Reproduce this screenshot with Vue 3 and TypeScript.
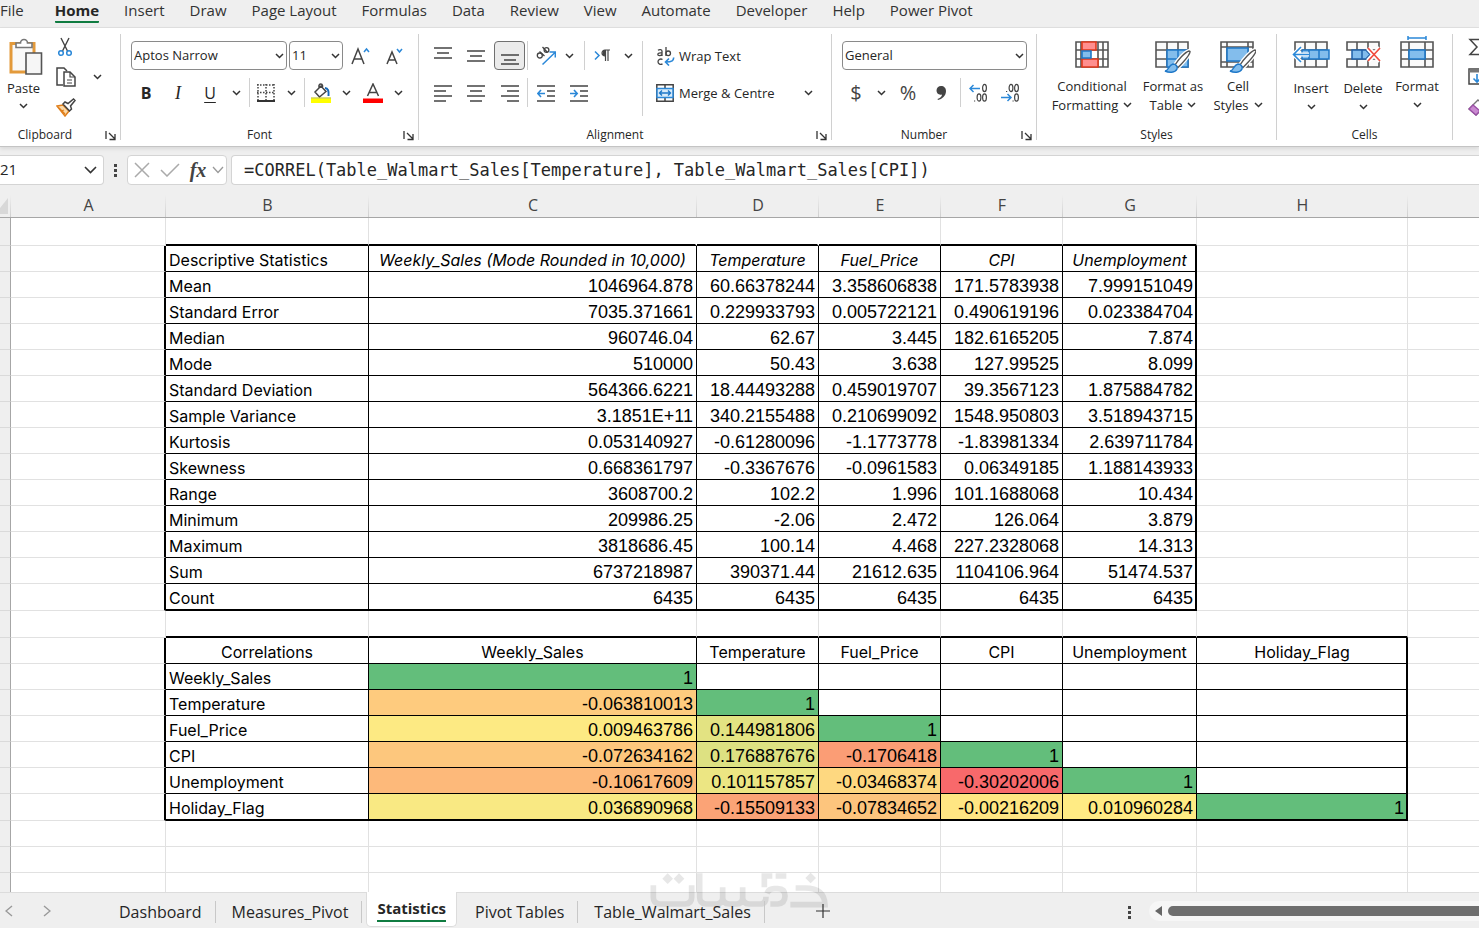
<script setup lang="ts">
import { h, ref } from 'vue'
import type { FunctionalComponent } from 'vue'

const Chev: FunctionalComponent = () =>
  h('svg', { width: 9, height: 6, viewBox: '0 0 9 6', 'aria-hidden': 'true' }, [
    h('path', { d: 'M1 1l3.5 3.5L8 1', fill: 'none', stroke: '#333', 'stroke-width': 1.5 }),
  ])

const Launcher: FunctionalComponent = () =>
  h('svg', { width: 11, height: 11, viewBox: '0 0 11 11', 'aria-hidden': 'true' }, [
    h('path', { d: 'M1 1v8M4 3l5.5 5.5M10 4v5.5H4.5', fill: 'none', stroke: '#333', 'stroke-width': 1.3 }),
  ])

const menu = ['File', 'Home', 'Insert', 'Draw', 'Page Layout', 'Formulas', 'Data', 'Review', 'View', 'Automate', 'Developer', 'Help', 'Power Pivot']
const sheets = ['Dashboard', 'Measures_Pivot', 'Statistics', 'Pivot Tables', 'Table_Walmart_Sales']
const columns = ['A', 'B', 'C', 'D', 'E', 'F', 'G', 'H', '']

const nameBox = ref('21')
const formula = ref('=CORREL(Table_Walmart_Sales[Temperature], Table_Walmart_Sales[CPI])')

interface Box { top: number; bottom: number; last: number }
const boxes: Box[] = [
  { top: 2, bottom: 15, last: 6 },
  { top: 17, bottom: 23, last: 7 },
]

const data: Record<number, string[]> = {
  2: ['Descriptive Statistics', 'Weekly_Sales (Mode Rounded in 10,000)', 'Temperature', 'Fuel_Price', 'CPI', 'Unemployment'],
  3: ['Mean', '1046964.878', '60.66378244', '3.358606838', '171.5783938', '7.999151049'],
  4: ['Standard Error', '7035.371661', '0.229933793', '0.005722121', '0.490619196', '0.023384704'],
  5: ['Median', '960746.04', '62.67', '3.445', '182.6165205', '7.874'],
  6: ['Mode', '510000', '50.43', '3.638', '127.99525', '8.099'],
  7: ['Standard Deviation', '564366.6221', '18.44493288', '0.459019707', '39.3567123', '1.875884782'],
  8: ['Sample Variance', '3.1851E+11', '340.2155488', '0.210699092', '1548.950803', '3.518943715'],
  9: ['Kurtosis', '0.053140927', '-0.61280096', '-1.1773778', '-1.83981334', '2.639711784'],
  10: ['Skewness', '0.668361797', '-0.3367676', '-0.0961583', '0.06349185', '1.188143933'],
  11: ['Range', '3608700.2', '102.2', '1.996', '101.1688068', '10.434'],
  12: ['Minimum', '209986.25', '-2.06', '2.472', '126.064', '3.879'],
  13: ['Maximum', '3818686.45', '100.14', '4.468', '227.2328068', '14.313'],
  14: ['Sum', '6737218987', '390371.44', '21612.635', '1104106.964', '51474.537'],
  15: ['Count', '6435', '6435', '6435', '6435', '6435'],
  17: ['Correlations', 'Weekly_Sales', 'Temperature', 'Fuel_Price', 'CPI', 'Unemployment', 'Holiday_Flag'],
  18: ['Weekly_Sales', '1'],
  19: ['Temperature', '-0.063810013', '1'],
  20: ['Fuel_Price', '0.009463786', '0.144981806', '1'],
  21: ['CPI', '-0.072634162', '0.176887676', '-0.1706418', '1'],
  22: ['Unemployment', '-0.10617609', '0.101157857', '-0.03468374', '-0.30202006', '1'],
  23: ['Holiday_Flag', '0.036890968', '-0.15509133', '-0.07834652', '-0.00216209', '0.010960284', '1'],
}

const scale: Record<string, string> = {
  '1': '#63be7b',
  '-0.063810013': '#fecb7e',
  '0.009463786': '#fdea83',
  '0.144981806': '#e3e382',
  '-0.072634162': '#fdc77d',
  '0.176887676': '#dde182',
  '-0.1706418': '#fb9d75',
  '-0.10617609': '#fdb97a',
  '0.101157857': '#ece683',
  '-0.03468374': '#fed880',
  '-0.30202006': '#f8696b',
  '0.036890968': '#f9e983',
  '-0.15509133': '#fba376',
  '-0.07834652': '#fdc57d',
  '-0.00216209': '#ffe683',
  '0.010960284': '#ffeb84',
}

const rowCount = 26

function text(r: number, c: number): string {
  return c > 0 ? data[r]?.[c - 1] ?? '' : ''
}

function cellClass(r: number, c: number): string[] {
  const out: string[] = []
  for (const b of boxes) {
    if (r === b.top - 1 && c >= 1 && c <= b.last) out.push('edge-bottom')
    if (r < b.top || r > b.bottom || c > b.last) continue
    if (c === 0) {
      out.push('edge-right')
      continue
    }
    out.push('ruled')
    if (c === b.last) out.push('edge-right')
    if (r === b.bottom) out.push('edge-bottom')
    if (r === b.top && (c > 1 || r === 17)) out.push('center')
    else if (c > 1) out.push('number')
    if (r === 2 && c > 1) out.push('italic')
  }
  if (r === 1 && (c === 2 || c === 3)) out.push('gap-right')
  return out
}

function fill(r: number, c: number): Record<string, string> | undefined {
  const color = r >= 18 && c > 1 ? scale[text(r, c)] : undefined
  return color ? { backgroundColor: color } : undefined
}
</script>

<template>
  <div class="app">
    <nav class="menu" aria-label="Ribbon tabs">
      <button v-for="m in menu" :key="m" class="menu-item" :class="{ active: m === 'Home' }"><span>{{ m }}</span></button>
    </nav>

    <div class="ribbon">
      <section class="group clipboard">
        <div class="cols">
          <button class="big paste">
            <svg width="34" height="38" viewBox="0 0 34 38">
              <path d="M2 5.500H25V34H2z" fill="#f9f9f9" stroke="#e39a3b" stroke-width="3" />
              <path d="M7 9.500V5h4.500a3.500 3.500 0 0 1 7 0H23v4.500z" fill="#fff" stroke="#777" stroke-width="1.600" />
              <path d="M17 15h15.500v21H17z" fill="#f6f6f6" stroke="#555" stroke-width="1.600" />
            </svg>
            <span>Paste</span>
            <Chev />
          </button>
          <div class="stack">
            <button class="ib" aria-label="Cut">
              <svg width="18" height="20" viewBox="-1 0 18 20">
                <path d="M4 1l6.500 13M12 1L5.500 14" fill="none" stroke="#444" stroke-width="1.400" />
                <circle cx="4" cy="16" r="2.300" fill="none" stroke="#2b88d8" stroke-width="1.500" />
                <circle cx="12" cy="16" r="2.300" fill="none" stroke="#2b88d8" stroke-width="1.500" />
              </svg>
            </button>
            <button class="ib copy" aria-label="Copy">
              <svg width="20" height="20" viewBox="0 0 20 20">
                <path d="M7 18H1V1h7l3 3" fill="none" stroke="#444" stroke-width="1.500" />
                <path d="M8 5h6l5 5v9H8z" fill="#fff" stroke="#444" stroke-width="1.500" />
                <path d="M14 5v5h5M11 13h5M11 16h5" fill="none" stroke="#444" stroke-width="1.200" />
              </svg>
              <Chev />
            </button>
            <button class="ib" aria-label="Format Painter">
              <svg width="20" height="19" viewBox="0 0 20 19">
                <path d="M1 8l6-1 6 6-4 5z" fill="#fbd9a8" stroke="#e07f1c" stroke-width="1.500" />
                <path d="M3 10l6 6M5 13l3-1" stroke="#e07f1c" stroke-width="1.300" />
                <path d="M7 6l2-2 3 1.500L17.500 1 19 2.500 14.500 8l1 3-2 2z" fill="#fff" stroke="#444" stroke-width="1.500" />
              </svg>
            </button>
          </div>
        </div>
        <footer><span>Clipboard</span><button class="launch" aria-label="Clipboard settings"><Launcher /></button></footer>
      </section>

      <section class="group font">
        <div class="row">
          <div class="pick family">
            <select aria-label="Font"><option>Aptos Narrow</option></select><Chev />
          </div>
          <div class="pick size">
            <select aria-label="Font size"><option>11</option></select><Chev />
          </div>
          <button class="ib w34" aria-label="Increase font size">
            <svg width="20" height="20" viewBox="0 0 20 20">
              <path d="M2 18L8 3l6 15M4.200 13h7.600" fill="none" stroke="#444" stroke-width="1.500" />
              <path d="M14 6l2.500-3L19 6" fill="none" stroke="#2b88d8" stroke-width="1.500" />
            </svg>
          </button>
          <button class="ib w34" aria-label="Decrease font size">
            <svg width="18" height="20" viewBox="0 0 18 20">
              <path d="M2 18L7 6l5 12M4 14h6" fill="none" stroke="#444" stroke-width="1.500" />
              <path d="M12 3l2.500 3L17 3" fill="none" stroke="#2b88d8" stroke-width="1.500" />
            </svg>
          </button>
        </div>
        <div class="row">
          <button class="ib w30 glyph bold">B</button>
          <button class="ib w34 glyph slant">I</button>
          <button class="ib w30 glyph under">U</button>
          <button class="ib w22" aria-label="Underline options"><Chev /></button>
          <i class="sep"></i>
          <button class="ib w28" aria-label="Borders">
            <svg width="18" height="18" viewBox="0 0 18 18">
              <path d="M0 1h18M1 0v16M17 0v16M9 0v16M0 8.500h18" fill="none" stroke="#444" stroke-width="1.500" stroke-dasharray="1.500 1.500" />
              <path d="M0 17h18" stroke="#333" stroke-width="2" />
            </svg>
          </button>
          <button class="ib w22" aria-label="Border options"><Chev /></button>
          <i class="sep"></i>
          <button class="ib w28" aria-label="Fill colour">
            <svg width="20" height="20" viewBox="0 0 20 20">
              <path d="M4 9l6-6 5 5.500-6.500 5.500zM8 6V2.500a1.800 1.800 0 0 1 3.500 0V5" fill="none" stroke="#444" stroke-width="1.500" />
              <path d="M14 5c3 0 4 3 3.500 8" fill="none" stroke="#1668b8" stroke-width="2" />
              <path d="M0 15.500h20V20H0z" fill="#ff0" /><path d="M0 15h20" stroke="#bb0" stroke-width="1" />
            </svg>
          </button>
          <button class="ib w22" aria-label="Fill options"><Chev /></button>
          <button class="ib w32" aria-label="Font colour">
            <svg width="20" height="20" viewBox="0 0 20 20">
              <path d="M4.500 13L10 1l5.500 12M6.500 9.500h7" fill="none" stroke="#444" stroke-width="1.500" />
              <path d="M0 15.500h20V20H0z" fill="#f00" />
            </svg>
          </button>
          <button class="ib w18" aria-label="Font colour options"><Chev /></button>
        </div>
        <footer><span>Font</span><button class="launch" aria-label="Font settings"><Launcher /></button></footer>
      </section>

      <section class="group align">
        <div class="cols">
          <div class="left">
            <div class="row">
              <button class="ib w30" aria-label="Top align"><svg width="18" height="18" viewBox="0 0 18 18"><path d="M0 1h18M3 6h12M0 11h18" stroke="#444" stroke-width="1.500" /></svg></button>
              <button class="ib w36" aria-label="Middle align"><svg width="18" height="18" viewBox="0 0 18 18"><path d="M0 4h18M3 9h12M0 14h18" stroke="#444" stroke-width="1.500" /></svg></button>
              <button class="ib w31 pressed" aria-label="Bottom align"><svg width="18" height="18" viewBox="0 0 18 18"><path d="M0 8h18M3 13h12M0 17h18" stroke="#444" stroke-width="1.500" /></svg></button>
              <i class="sep"></i>
              <button class="ib w32" aria-label="Orientation">
                <svg width="20" height="20" viewBox="0 0 20 20">
                  <g fill="none" stroke="#444" stroke-width="1.300"><circle cx="3.800" cy="9.500" r="2.500" /><path d="M3.500 5.500l5 4.500M6.500 1l5 5.500" /><circle cx="10.500" cy="4" r="2.400" /></g>
                  <path d="M6.500 18.500L19 6.500M13.500 6H19.300v5.500" fill="none" stroke="#2b88d8" stroke-width="1.500" />
                </svg>
              </button>
              <button class="ib w18 tight" aria-label="Orientation options"><Chev /></button>
              <i class="sep"></i>
              <button class="ib w30" aria-label="Text direction">
                <svg width="16" height="14" viewBox="0 0 16 14">
                  <path d="M1 2.500L5 6.500l-4 4" fill="none" stroke="#2b88d8" stroke-width="1.500" />
                  <path d="M11 7a3 3 0 0 1 0-6h5M11.500 1v11M14 1v11" fill="none" stroke="#444" stroke-width="1.200" /><path d="M11.500 1v6a3 3 0 0 1 0-6" fill="#444" />
                </svg>
              </button>
              <button class="ib w22" aria-label="Direction options"><Chev /></button>
            </div>
            <div class="row">
              <button class="ib w30" aria-label="Align left"><svg width="18" height="18" viewBox="0 0 18 18"><path d="M0 2h18M0 7h12M0 12h18M0 17h12" stroke="#444" stroke-width="1.500" /></svg></button>
              <button class="ib w36" aria-label="Centre"><svg width="18" height="18" viewBox="0 0 18 18"><path d="M0 2h18M3 7h12M0 12h18M3 17h12" stroke="#444" stroke-width="1.500" /></svg></button>
              <button class="ib w31" aria-label="Align right"><svg width="18" height="18" viewBox="0 0 18 18"><path d="M0 2h18M6 7h12M0 12h18M6 17h12" stroke="#444" stroke-width="1.500" /></svg></button>
              <i class="sep"></i>
              <button class="ib w32" aria-label="Decrease indent"><svg width="18" height="18" viewBox="0 0 18 18"><path d="M0 2h18M10 7h8M10 12h8M0 17h18" stroke="#444" stroke-width="1.500" /><path d="M8 9.500H1M4 6L.8 9.500 4 13" fill="none" stroke="#2b88d8" stroke-width="1.600" /></svg></button>
              <button class="ib w34" aria-label="Increase indent"><svg width="18" height="18" viewBox="0 0 18 18"><path d="M0 2h18M10 7h8M10 12h8M0 17h18" stroke="#444" stroke-width="1.500" /><path d="M0 9.500h7M4 6l3.200 3.500L4 13" fill="none" stroke="#2b88d8" stroke-width="1.600" /></svg></button>
            </div>
          </div>
          <div class="right">
            <div class="row">
              <button class="tb">
                <svg width="20" height="20" viewBox="0 0 20 20">
                  <g fill="none" stroke="#444" stroke-width="1.300"><path d="M3 4.200c1.500-1 4-.8 4 1V10M7 7C4.500 6.800 2.800 7 2.800 8.500S5.800 10 7 8.500M11 1v9" /><circle cx="13.200" cy="7.300" r="2.300" /><path d="M7.500 13.500c-2-1.200-4.500 0-4.500 2.200s2.500 3.300 4.500 2.200" /></g>
                  <path d="M18.500 11.500c.5 3-1.500 4.500-7.500 4.500M14 12.500L10.500 16l3.500 3.500" fill="none" stroke="#2b88d8" stroke-width="1.600" />
                </svg>
                <span>Wrap Text</span>
              </button>
            </div>
            <div class="row">
              <button class="tb">
                <svg width="20" height="20" viewBox="0 0 20 20">
                  <path d="M1.800 1.800h16.400v16.400H1.800zM10 2v4M10 14v4" fill="#fff" stroke="#444" stroke-width="1.500" />
                  <path d="M2 5.500h16v9H2z" fill="#d9ebf9" stroke="#2b88d8" stroke-width="1.500" />
                  <path d="M4.500 10h11M7 7.500L4.500 10 7 12.500M13 7.500l2.500 2.500-2.500 2.500" fill="none" stroke="#1f78c8" stroke-width="1.400" />
                </svg>
                <span>Merge &amp; Centre</span>
              </button>
              <button class="ib w22 last" aria-label="Merge options"><Chev /></button>
            </div>
          </div>
        </div>
        <footer><span>Alignment</span><button class="launch" aria-label="Alignment settings"><Launcher /></button></footer>
      </section>

      <section class="group number-group">
        <div class="row">
          <div class="pick format">
            <select aria-label="Number format"><option>General</option></select><Chev />
          </div>
        </div>
        <div class="row">
          <button class="ib w28 sign">$</button>
          <button class="ib w22" aria-label="Currency options"><Chev /></button>
          <button class="ib w32 sign">%</button>
          <button class="ib w34" aria-label="Comma style">
            <svg width="12" height="16" viewBox="0 0 12 16"><path d="M6 1c3 0 5 2 5 5 0 5-4 8-8 9l-.5-1C5 13 7 11.500 7 9.500 3.500 10.500 1.500 8 1.500 5.500S3.500 1 6 1z" fill="#444" /></svg>
          </button>
          <i class="sep"></i>
          <button class="ib w30" aria-label="Increase decimal">
            <svg width="18" height="20" viewBox="0 0 18 20">
              <path d="M11 5.500H1M4.500 2L1 5.500 4.500 9" fill="none" stroke="#2b88d8" stroke-width="1.500" />
              <g fill="none" stroke="#444" stroke-width="1.200"><ellipse cx="15.500" cy="5" rx="1.900" ry="3.600" /><ellipse cx="10" cy="14.500" rx="1.900" ry="3.600" /><ellipse cx="15.500" cy="14.500" rx="1.900" ry="3.600" /><path d="M5 18h1.200" /></g>
            </svg>
          </button>
          <button class="ib w34" aria-label="Decrease decimal">
            <svg width="18" height="20" viewBox="0 0 18 20">
              <path d="M0 14.500h10M6.500 11l3.500 3.500L6.500 18" fill="none" stroke="#2b88d8" stroke-width="1.500" />
              <g fill="none" stroke="#444" stroke-width="1.200"><ellipse cx="15.500" cy="14.500" rx="1.900" ry="3.600" /><ellipse cx="10" cy="5" rx="1.900" ry="3.600" /><ellipse cx="15.500" cy="5" rx="1.900" ry="3.600" /><path d="M5 8.500h1.200M11.500 18h1.200" /></g>
            </svg>
          </button>
        </div>
        <footer><span>Number</span><button class="launch" aria-label="Number settings"><Launcher /></button></footer>
      </section>

      <section class="group styles">
        <div class="cols">
          <button class="big w82">
            <svg width="36" height="36" viewBox="0 0 36 36">
              <path d="M2 3h32v25H2zM7 3v25M29 3v25M24 3v25M2 11h32M2 20h32" fill="#fff" stroke="#555" stroke-width="1.600" />
              <path d="M8 3h14v8H8zM8 20h16v8H8z" fill="#ff8f8f" stroke="#e0391c" stroke-width="1.600" />
              <path d="M8 12h9v7H8z" fill="#83bdec" stroke="#1f78c8" stroke-width="1.600" />
            </svg>
            <span>Conditional</span>
            <span class="with-chev">Formatting <Chev /></span>
          </button>
          <button class="big w80">
            <svg width="36" height="36" viewBox="0 0 36 36">
              <path d="M1 3h32v25H1zM12 3v25M23 3v25M1 11h32M1 20h32" fill="#fafafa" stroke="#555" stroke-width="1.600" />
              <path d="M12 11h21v17H12zM23 11v17M12 20h21" fill="#83bdec" stroke="#1f78c8" stroke-width="1.500" />
              <path d="M34 12c-4 1-11 9-14 14l3 2.500c4-4 12-12 12-16z" fill="#fff" stroke="#fff" stroke-width="4" />
              <path d="M34 12c-4 1-11 9-14 14l3 2.500c4-4 12-12 12-16z" fill="#fff" stroke="#555" stroke-width="1.400" />
              <path d="M10 32c4 0 3-6 8-7 3 0 5 3 4 5-2 4-8 4-12 2z" fill="#83bdec" stroke="#1f78c8" stroke-width="1.500" />
            </svg>
            <span>Format as</span>
            <span class="with-chev">Table <Chev /></span>
          </button>
          <button class="big w50">
            <svg width="36" height="36" viewBox="0 0 36 36">
              <path d="M1 3h32v25H1zM7 3v25M28 3v25M1 8h32M1 23h32" fill="#fafafa" stroke="#555" stroke-width="1.600" />
              <path d="M7 9h21v13H7z" fill="#83bdec" stroke="#1f78c8" stroke-width="1.600" />
              <path d="M35 11c-4 1-12 10-15 15l3 2.500c4-4 13-13 13-17z" fill="#fff" stroke="#fff" stroke-width="4" />
              <path d="M35 11c-4 1-12 10-15 15l3 2.500c4-4 13-13 13-17z" fill="#fff" stroke="#555" stroke-width="1.400" />
              <path d="M10 32c4 0 3-6 8-7 3 0 5 3 4 5-2 4-8 4-12 2z" fill="#83bdec" stroke="#1f78c8" stroke-width="1.500" />
            </svg>
            <span>Cell</span>
            <span class="with-chev">Styles <Chev /></span>
          </button>
        </div>
        <footer><span>Styles</span></footer>
      </section>

      <section class="group cells">
        <div class="cols">
          <button class="big w50">
            <svg width="38" height="36" viewBox="0 0 38 36">
              <path d="M3 3h32v25H3zM13 3v25M24 3v25M3 11h32M3 20h32" fill="#fafafa" stroke="#555" stroke-width="1.600" />
              <path d="M10 11h27v9H10zM17 11v9M27 11v9" fill="#83bdec" stroke="#1f78c8" stroke-width="1.500" />
              <path d="M9 8L1.500 15.500 9 23M2 15.500h15" fill="none" stroke="#fff" stroke-width="4" />
              <path d="M9 8L1.500 15.500 9 23M2 15.500h15" fill="none" stroke="#2b88d8" stroke-width="1.600" />
            </svg>
            <span>Insert</span>
            <Chev />
          </button>
          <button class="big w54">
            <svg width="38" height="36" viewBox="0 0 38 36">
              <path d="M3 3h32v8H3zM3 20h32v8H3zM13 3v8M24 3v8M13 20v8M24 20v8" fill="#fafafa" stroke="#555" stroke-width="1.600" />
              <path d="M8 11h14l4 4.500-4 4.500H8zM18 11v9" fill="#83bdec" stroke="#1f60a8" stroke-width="1.500" />
              <path d="M24 9l12 13M36 9L24 22" stroke="#fff" stroke-width="5" />
              <path d="M24 9l12 13M36 9L24 22" stroke="#f04c3e" stroke-width="1.700" />
            </svg>
            <span>Delete</span>
            <Chev />
          </button>
          <button class="big w54 format-cells">
            <svg width="36" height="36" viewBox="0 4 36 36" overflow="visible">
              <path d="M2 7h32v25H2zM10 7v25M26 7v25M2 15h32M2 24h32" fill="#fafafa" stroke="#555" stroke-width="1.600" />
              <path d="M10 15h16v9H10z" fill="#83bdec" stroke="#1f78c8" stroke-width="1.600" />
              <path d="M9 3h18M9 1v4M27 1v4" stroke="#2b88d8" stroke-width="1.500" />
            </svg>
            <span>Format</span>
            <Chev />
          </button>
        </div>
        <footer><span>Cells</span></footer>
      </section>

      <section class="group editing">
        <div class="stack">
          <button class="ib" aria-label="AutoSum"><svg width="18" height="18" viewBox="0 0 18 18"><path d="M16 4V1.500H2L9 9l-7 7.500h14V14" fill="none" stroke="#444" stroke-width="1.500" /></svg></button>
          <button class="ib" aria-label="Fill"><svg width="18" height="18" viewBox="0 0 18 18"><path d="M1 1h16v15H1z" fill="#fff" stroke="#444" stroke-width="1.500" /><path d="M1 3h16" stroke="#777" stroke-width="3" /><path d="M9 6v8M5.500 10.500L9 14l3.500-3.500" fill="none" stroke="#2b88d8" stroke-width="1.600" /></svg></button>
          <button class="ib" aria-label="Clear"><svg width="18" height="18" viewBox="0 0 18 18"><path d="M1 11L10 2l7 6-9 9z" fill="#fff" stroke="#777" stroke-width="1.300" /><path d="M1 11l4-4 7 6-4 4z" fill="#c98ad0" stroke="#9a4fa5" stroke-width="1.300" /></svg></button>
        </div>
      </section>
    </div>

    <div class="formula-bar">
      <div class="name-box">
        <input v-model="nameBox" aria-label="Name box" />
        <button class="ib" aria-label="Name list"><svg width="13" height="8" viewBox="0 0 13 8"><path d="M1 1l5.500 5.500L12 1" fill="none" stroke="#333" stroke-width="1.600" /></svg></button>
      </div>
      <span class="dots"><b></b><b></b><b></b></span>
      <div class="fx-box">
        <button class="ib w28" aria-label="Cancel"><svg width="16" height="16" viewBox="0 0 16 16"><path d="M1 1l14 14M15 1L1 15" stroke="#aaa" stroke-width="1.500" /></svg></button>
        <button class="ib w28" aria-label="Enter"><svg width="20" height="14" viewBox="0 0 20 14"><path d="M1 7l6 6L19 1" fill="none" stroke="#aaa" stroke-width="1.500" /></svg></button>
        <button class="ib w28 fx">fx</button>
        <button class="ib" aria-label="Function list"><svg width="12" height="8" viewBox="0 0 12 8"><path d="M1 1l5 5.500L11 1" fill="none" stroke="#999" stroke-width="1.300" /></svg></button>
      </div>
      <input v-model="formula" class="formula" aria-label="Formula" spellcheck="false" />
    </div>

    <main class="grid-area">
      <table class="grid">
        <colgroup>
          <col class="c-row" /><col class="c-a" /><col class="c-b" /><col class="c-c" /><col class="c-d" /><col class="c-d" /><col class="c-d" /><col class="c-g" /><col class="c-h" /><col />
        </colgroup>
        <thead>
          <tr>
            <th class="corner"><svg width="8" height="16" viewBox="0 0 8 16"><path d="M8 0v16H0V10z" fill="#d8d8d8" /></svg></th>
            <th v-for="(c, i) in columns" :key="i" scope="col">{{ c }}</th>
          </tr>
        </thead>
        <tbody>
          <tr v-for="r in rowCount" :key="r" :class="{ first: r === 1, tall: r === 15 || r === 16 || r === 23 }">
            <th scope="row" :aria-label="`Row ${r}`"></th>
            <td v-for="(c, i) in columns" :key="i" :class="cellClass(r, i)" :style="fill(r, i)">{{ text(r, i) }}</td>
          </tr>
        </tbody>
      </table>
    </main>

    <div class="bottom">
      <svg class="mark" width="190" height="50" viewBox="0 0 570 150" aria-hidden="true">
        <g fill="none" stroke="#000" stroke-width="17">
          <path d="M25 52V88q0 20 20 20H120q20 0 20-20V52" />
          <path d="M164 16V88q0 20 20 20H215q18 0 18-20V58M233 88q0 20 20 20H275q18 0 18-20V58M293 88q0 20 20 20H345q18 0 18-22M366 76q6-14 22-14h10q22 0 22 22t-22 24H376M358 58V24H382M392 24H424" />
          <path d="M452 60H480q58 0 60 50H436" />
        </g>
        <path d="M68 16l16 16-16 16-16-16zM102 16l16 16-16 16-16-16zM497 14l16 16-16 16-16-16z" />
      </svg>
      <div class="arrows">
        <button class="ib" aria-label="Previous sheet"><svg width="8" height="12" viewBox="0 0 8 12"><path d="M7 1L1 6l6 5" fill="none" stroke="#999" stroke-width="1.400" /></svg></button>
        <button class="ib" aria-label="Next sheet"><svg width="8" height="12" viewBox="0 0 8 12"><path d="M1 1l6 5-6 5" fill="none" stroke="#999" stroke-width="1.400" /></svg></button>
      </div>
      <div class="sheets">
        <button v-for="s in sheets" :key="s" class="sheet" :class="{ current: s === 'Statistics' }"><span>{{ s }}</span></button>
      </div>
      <button class="ib add" aria-label="New sheet"><svg width="14" height="14" viewBox="0 0 14 14"><path d="M7 0v14M0 7h14" stroke="#333" stroke-width="1.200" /></svg></button>
      <span class="dots"><b></b><b></b><b></b></span>
      <div class="scroll"><svg width="9" height="12" viewBox="0 0 9 12"><path d="M8 1v10L1 6z" fill="#666" /></svg><div class="thumb"></div></div>
    </div>
  </div>
</template>

<style>
body { margin: 0; overflow: hidden; }
</style>

<style scoped>
.app { height: 100vh; display: flex; flex-direction: column; background: #efefef; color: #262626; font: 13px/18px "Open Sans", "Noto Sans", sans-serif; overflow: hidden; }
button, input, select { font: inherit; color: inherit; border: 0; padding: 0; margin: 0; background: none; border-radius: 0; outline: none; }
svg { flex: none; display: block; }

.menu { display: flex; gap: 25px; height: 27px; flex: none; border-bottom: 1px solid #e0e0e0; white-space: nowrap; }
.menu-item { display: flex; align-items: flex-start; font-size: 15px; line-height: 20px; color: #333; }
.menu-item:first-child { margin-right: 6px; }
.menu-item.active { font-weight: 700; color: #262626; }
.menu-item.active span { padding-bottom: 1px; border-bottom: 2px solid #107c41; border-radius: 1px; }

.ribbon { display: flex; flex: none; height: 118px; background: #fff; border-bottom: 1px solid #c4c4c4; box-shadow: 0 2px 4px #00000018; overflow: hidden; }
.group { box-sizing: border-box; flex: none; margin-top: 6px; height: 106px; padding-top: 7px; border-right: 1px solid #d0d0d0; display: flex; flex-direction: column; }
.row { display: flex; align-items: center; height: 29px; margin-bottom: 8px; }
.cols { display: flex; }
.group footer { margin-top: auto; height: 10px; display: flex; align-items: center; }
.group footer span { flex: 1; text-align: center; font-size: 12px; line-height: 12px; }
.launch { width: 20px; display: flex; justify-content: center; }
.ib { display: flex; align-items: center; justify-content: center; flex: none; height: 29px; box-sizing: border-box; }
.w18 { width: 18px; } .w22 { width: 22px; } .w28 { width: 28px; } .w30 { width: 30px; } .w31 { width: 31px; }
.w32 { width: 32px; } .w34 { width: 34px; } .w36 { width: 36px; } .w50 { width: 50px; } .w54 { width: 54px; } .w80 { width: 80px; } .w82 { width: 82px; }
.sep { width: 1px; height: 29px; background: #d0d0d0; margin: 0 2px; }
.big { display: flex; flex-direction: column; align-items: center; flex: none; line-height: 19px; white-space: nowrap; }
.with-chev { display: flex; align-items: center; gap: 5px; }
.stack { display: flex; flex-direction: column; }
.stack .ib { height: 30px; }

.clipboard { width: 121px; }
.clipboard .cols { margin-top: -9px; }
.clipboard footer { margin-left: -10px; }
.paste { width: 47px; padding-top: 6px; }
.paste svg:first-child { margin-left: 5px; }
.paste span { padding: 3px 0 5px; }
.clipboard .stack { width: 60px; }
.clipboard .stack .ib { justify-content: flex-start; padding-left: 9px; gap: 17px; }

.font { width: 298px; }
.font .row { padding-left: 10px; }
.pick { display: grid; align-items: center; box-sizing: border-box; height: 29px; border: 1px solid #8a8a8a; border-radius: 4px; background: #fff; }
.pick > * { grid-area: 1 / 1; }
.pick select { appearance: none; width: 100%; height: 27px; padding-left: 2px; padding-bottom: 2px; }
.pick svg { justify-self: end; margin-right: 2px; pointer-events: none; }
.family { width: 156px; margin-right: 2px; }
.size { width: 54px; }
.glyph { font-size: 16px; }
.bold { font-weight: 700; }
.slant { font-family: "Liberation Serif", serif; font-style: italic; font-size: 18px; }
.under { text-decoration: underline; text-underline-offset: 3px; }

.align { width: 413px; }
.left { width: 214px; padding-left: 9px; border-right: 1px solid #d0d0d0; height: 75px; }
.right { flex: 1; padding-left: 12px; }
.pressed { border: 1px solid #707070; border-radius: 4px; background: #ebebeb; }
.tight { margin-left: -2px; margin-right: 4px; }
.tb { display: flex; align-items: center; gap: 4px; white-space: nowrap; }
.last { margin-left: auto; margin-right: 12px; }

.number-group { width: 205px; }
.number-group .row { padding-left: 10px; }
.format { width: 185px; }
.sign { font-size: 20px; color: #444; }

.styles { width: 240px; }
.styles .cols { padding-left: 14px; }
.cells { width: 176px; }
.cells .cols { padding-left: 9px; align-items: flex-start; }
.styles .big, .cells .big { margin-top: -2px; }
.styles .big svg:first-child { margin-bottom: 2px; }
.cells .big svg:first-child { margin-bottom: 4px; }
.cells .format-cells svg:first-child { margin-bottom: 2px; }
.cells .big span { padding-bottom: 6px; }
.editing { border: 0; padding-left: 15px; flex: 1; }
.editing .stack { align-items: flex-start; margin-top: -9px; }

.formula-bar { display: flex; align-items: center; flex: none; height: 40px; box-sizing: border-box; }
.name-box, .fx-box, .formula { box-sizing: border-box; height: 30px; background: #fff; border: 1px solid #d4d4d4; border-radius: 4px; margin-top: 8px; margin-bottom: 2px; }
.name-box { width: 104px; display: flex; align-items: center; border-left: 0; border-radius: 0 4px 4px 0; padding-right: 6px; }
.name-box input { flex: 1; min-width: 0; font-size: 15px; height: 26px; padding-bottom: 2px; box-sizing: border-box; }
.dots { display: flex; flex-direction: column; gap: 2px; width: 23px; align-items: center; padding-top: 6px; }
.dots b { width: 3px; height: 3px; background: #444; }
.fx-box { width: 100px; display: flex; align-items: center; margin-right: 4px; }
.fx { font: italic bold 20px/24px "Liberation Serif", serif; color: #444; }
.formula { flex: 1; min-width: 0; border-right: 0; border-radius: 4px 0 0 4px; padding-left: 12px; font: 17px/24px "DejaVu Sans Mono", monospace; color: #262626; }

.grid-area { flex: 1; min-height: 0; overflow: hidden; background: #fff; }
.grid { width: 100%; table-layout: fixed; border-collapse: separate; border-spacing: 0; font: 16px/22px Inter, "Open Sans", sans-serif; color: #000; }
.c-row { width: 11px; } .c-a { width: 155px; } .c-b { width: 203px; } .c-c { width: 328px; } .c-d { width: 122px; } .c-g { width: 134px; } .c-h { width: 211px; }
.grid th, .grid td { box-sizing: border-box; padding: 0; white-space: nowrap; }
.grid thead th { height: 31px; padding-top: 6px; background: linear-gradient(#efefef, #cfcfcf) right bottom / 1px 22px no-repeat #efefef; border-bottom: 1px solid #a6a6a6; font: 16px/22px "Open Sans", sans-serif; color: #444; }
.grid thead .corner { vertical-align: bottom; padding: 0 3px 3px 0; }
.grid tbody th { background: #efefef; border-right: 1px solid #a6a6a6; border-bottom: 1px solid #dadada; }
.grid td { height: 26px; padding: 3px 3px 0; border-right: 1px solid #e1e1e1; border-bottom: 1px solid #e1e1e1; line-height: 20px; }
.grid td:last-child { border-right: 0; }
.grid thead th:last-child { background: #efefef; }
.grid .first td { height: 28px; }
.grid .tall td { height: 27px; }
.grid td.ruled { border-color: #000; }
.grid td.edge-right { border-right: 2px solid #000; padding-right: 2px; }
.grid td.edge-bottom { border-bottom: 2px solid #000; }
.grid td.gap-right { border-right: 2px solid #fff; }
.grid .center { text-align: center; }
.grid .number { text-align: right; font-family: "Liberation Sans", sans-serif; font-size: 18px; }
.italic { font-style: italic; }

.bottom { position: relative; display: flex; align-items: center; flex: none; height: 36px; box-sizing: border-box; border-top: 1px solid #dcdcdc; }
.mark { position: absolute; left: 645px; top: -25px; opacity: .09; pointer-events: none; }
.arrows { display: flex; width: 103px; gap: 30px; padding-left: 5px; box-sizing: border-box; flex: none; }
.sheets { display: flex; height: 100%; position: relative; }
.sheet { display: flex; align-items: center; height: 22px; margin-top: 8px; padding: 0 13px 0 16px; border-right: 1px solid #c8c8c8; font-size: 16px; white-space: nowrap; }
.sheet.current { height: 35px; margin: -1px 2px 0 4px; padding: 0 10px; background: #fff; border: 1px solid #dcdcdc; border-top: 0; border-radius: 0 0 5px 5px; font-weight: 700; font-size: 15px; }
.sheet.current span { border-bottom: 2px solid #107c41; line-height: 24px; }
.add { margin-left: 51px; }
.bottom .dots { margin-left: auto; padding-top: 3px; }
.scroll { display: flex; align-items: center; gap: 5px; width: 330px; height: 20px; margin-left: 8px; padding-left: 5px; box-sizing: border-box; background: #f6f6f6; border-radius: 10px 0 0 10px; }
.thumb { flex: 1; height: 10px; background: #6e6e6e; border-radius: 5px 0 0 5px; }
</style>
